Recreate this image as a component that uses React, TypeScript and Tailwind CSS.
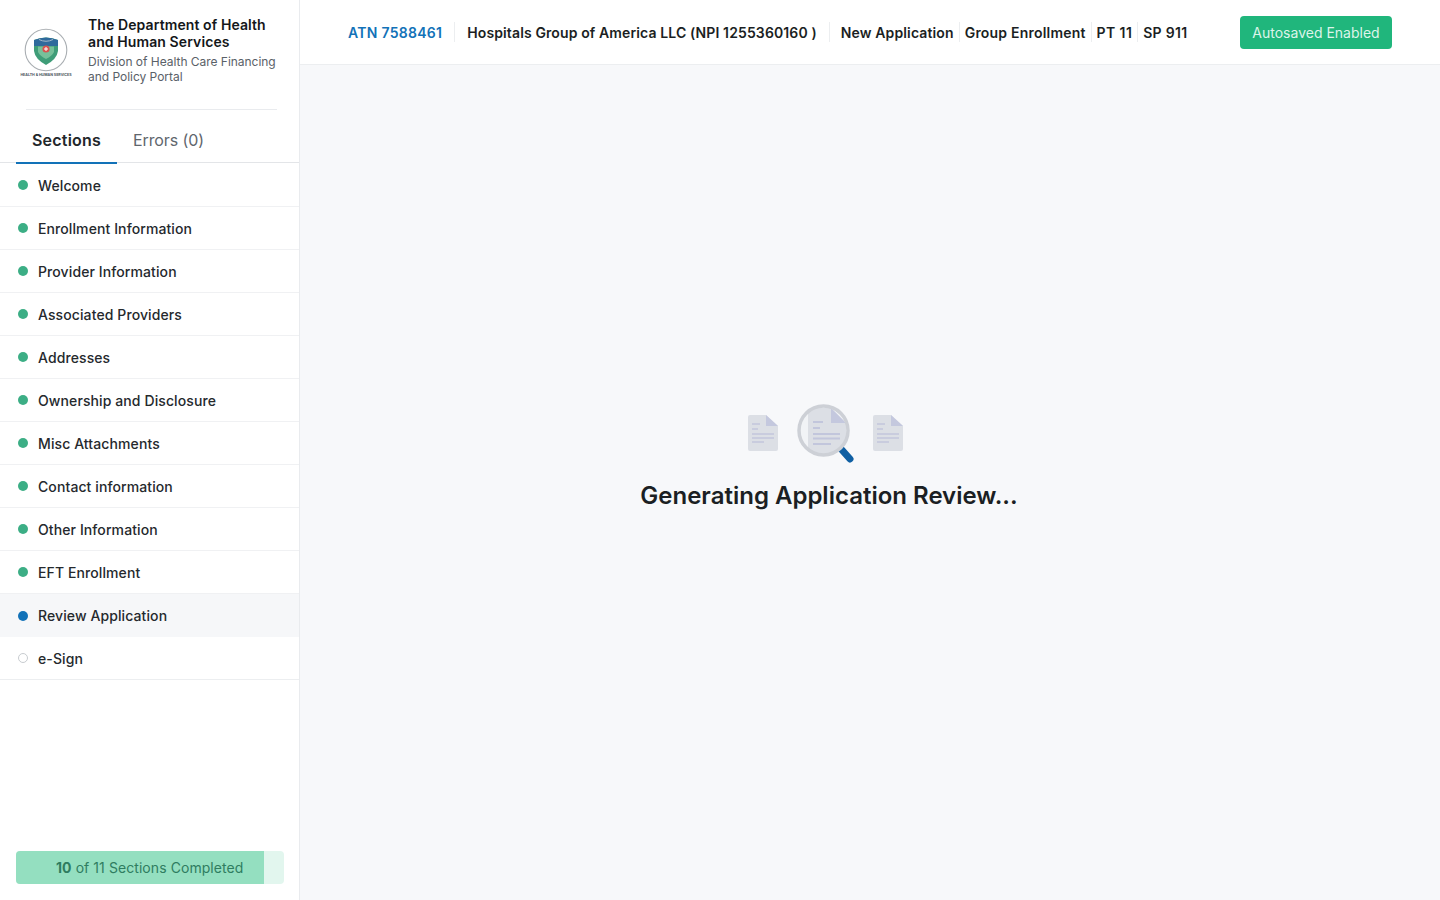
const sections = [
  'Welcome',
  'Enrollment Information',
  'Provider Information',
  'Associated Providers',
  'Addresses',
  'Ownership and Disclosure',
  'Misc Attachments',
  'Contact information',
  'Other Information',
  'EFT Enrollment',
];

function Logo() {
  return (
    <div className="flex h-[64px] w-[52px] shrink-0 flex-col items-center">
      <svg viewBox="0 0 44 44" className="mt-[12px] h-[44px] w-[44px] shrink-0">
        <circle cx="22" cy="22" r="20.8" fill="#fff" stroke="#a9aeb2" strokeWidth="1.1" />
        <path d="M10 12 Q22 7 34 12 L34 23 Q33 31 22 37 Q11 31 10 23 Z" fill="#3f9d78" />
        <path d="M10 12 Q22 7 34 12 L34 18 L10 18 Z" fill="#2f6a9c" />
        <path d="M14 18.5 H30 L30 24 Q28 28 22 31 Q16 28 14 24 Z" fill="#77c09a" />
        <circle cx="22" cy="21" r="3.6" fill="#d9534f" />
        <path d="M22 19 V23 M20 21 H24" stroke="#fff" strokeWidth="1" />
        <path d="M15 11.5 Q22 15 29 11.5" fill="none" stroke="#a6bacb" strokeWidth="1" />
      </svg>
      <span className="mt-[1px] text-[3.6px] leading-[5px] font-bold whitespace-nowrap text-[#4a5560]">
        HEALTH &amp; HUMAN SERVICES
      </span>
    </div>
  );
}

function Lens() {
  return (
    <svg viewBox="0 0 60 60" className="h-[60px] w-[60px]">
      <defs>
        <clipPath id="lens-clip">
          <circle cx="27.5" cy="27.5" r="24.5" />
        </clipPath>
      </defs>
      <path d="M46 47 L54 56" stroke="#0f5fa3" strokeWidth="7" strokeLinecap="round" />
      <circle cx="27.5" cy="27.5" r="24.5" fill="#f1f3f6" />
      <g clipPath="url(#lens-clip)">
        <path d="M12 5 H35 L50 20 V56 H12 Z" fill="#dcdfe5" />
        <path d="M35 5 L50 20 H35 Z" fill="#c4c8de" />
        <path d="M17 19 H27 M17 25 H24" stroke="#c2c6dc" strokeWidth="1.8" />
        <path d="M17 31 H44 M17 35.5 H44 M17 41 H35" stroke="#c2c6dc" strokeWidth="2" />
      </g>
      <circle cx="27.5" cy="27.5" r="24.5" fill="none" stroke="#cdd0d6" strokeWidth="3.5" />
    </svg>
  );
}

function Doc() {
  return (
    <svg viewBox="0 0 30 38" className="h-[38px] w-[30px]">
      <path d="M2 1 H18 L30 12 V35 Q30 37 28 37 H2 Q0 37 0 35 V3 Q0 1 2 1 Z" fill="#dcdfe5" />
      <path d="M18 1 L30 12 H18 Z" fill="#c4c8de" />
      <path d="M4 10 H12 M4 15 H10" stroke="#c2c6dc" strokeWidth="1.6" />
      <path d="M4 20 H26 M4 24 H26 M4 28 H16" stroke="#c2c6dc" strokeWidth="1.6" />
    </svg>
  );
}

export default function App() {
  return (
    <div className="flex h-[900px] w-[1440px] overflow-hidden bg-white font-['Inter',sans-serif] text-[#1b1f23]">
      <aside className="flex w-[300px] shrink-0 flex-col border-r border-[#e9ebee] bg-white">
        <div className="flex px-[20px] pt-[16px]">
          <Logo />
          <div className="ml-[16px]">
            <h1 className="text-[14px] leading-[17px] font-semibold tracking-[0.1px] text-[#14171a]">
              The Department of Health
              <br />
              and Human Services
            </h1>
            <p className="mt-[4px] text-[12px] leading-[15px] tracking-[-0.03px] text-[#5a6168]">
              Division of Health Care Financing
              <br />
              and Policy Portal
            </p>
          </div>
        </div>
        <div className="mt-[25px] ml-[26px] h-px w-[251px] bg-[#e9ebee]" />
        <div className="flex h-[53px] border-b border-[#e3e5e8] px-[16px]">
          <div className="-mb-[2px] flex w-[101px] items-center justify-center border-b-2 border-[#1272b8] pt-[8px] text-[16px] font-semibold tracking-[0.2px] text-[#22262a]">
            Sections
          </div>
          <div className="flex items-center pt-[8px] pl-[16px] text-[16px] tracking-[-0.1px] text-[#5f666d]">Errors (0)</div>
        </div>
        <ul className="pt-px">
          {sections.map((name) => (
            <li key={name} className="flex h-[43px] items-center gap-[10px] border-b border-[#f0f1f3] pl-[18px] text-[14px] font-medium tracking-[0.1px] text-[#25292d]">
              <span className="h-[10px] w-[10px] rounded-full bg-[#3cae85]" />
              {name}
            </li>
          ))}
          <li className="flex h-[43px] items-center gap-[10px] bg-[#f6f7f9] pl-[18px] text-[14px] font-medium tracking-[0.1px] text-[#25292d]">
            <span className="h-[10px] w-[10px] rounded-full bg-[#1272b8]" />
            Review Application
          </li>
          <li className="flex h-[43px] items-center gap-[10px] border-b border-[#eceef0] pl-[18px] text-[14px] font-medium tracking-[0.1px] text-[#25292d]">
            <span className="h-[10px] w-[10px] rounded-full border border-[#c8ccd0] bg-white" />
            e-Sign
          </li>
        </ul>
        <div className="mt-auto pr-[15px] pb-[16px] pl-[16px]">
          <div className="h-[33px] overflow-hidden rounded-[4px] bg-[#e2f6ee]">
            <div className="flex h-full w-[248px] items-center bg-[#94dfc0] pl-[40px] text-[14px] tracking-[0.07px] whitespace-nowrap text-[#2f7d60]">
              <span className="font-bold">10</span>&nbsp;of 11 Sections Completed
            </div>
          </div>
        </div>
      </aside>
      <main className="flex min-w-0 flex-1 flex-col">
        <header className="flex h-[65px] shrink-0 items-center border-b border-[#eceef0] bg-white px-[48px] text-[14px] font-semibold text-[#1b1f23]">
          <span className="tracking-[0.27px] text-[#1272b8]">ATN 7588461</span>
          <span className="mx-[12px] h-[20px] w-px shrink-0 bg-[#eceef0]" />
          <span className="tracking-[0.12px]">Hospitals Group of America LLC (NPI 1255360160 )</span>
          <span className="mr-[5px] ml-[12px] h-[20px] w-px shrink-0 bg-[#eceef0]" />
          <span className="ml-[6px] tracking-[0.13px]">New Application</span>
          <span className="mx-[5px] h-[20px] w-px shrink-0 bg-[#eceef0]" />
          <span className="tracking-[0.2px]">Group Enrollment</span>
          <span className="mx-[5px] h-[20px] w-px shrink-0 bg-[#eceef0]" />
          <span className="tracking-[0.4px]">PT 11</span>
          <span className="mx-[5px] h-[20px] w-px shrink-0 bg-[#eceef0]" />
          <span className="tracking-[0.3px]">SP 911</span>
          <button className="ml-auto flex h-[33px] w-[152px] items-center justify-center rounded-[4px] bg-[#20b67c] text-[14px] font-normal text-[#dcf4ea]">
            Autosaved Enabled
          </button>
        </header>
        <div className="flex flex-1 flex-col items-center bg-[#f7f8fa] pt-[338px] pr-[82px]">
          <div className="mr-[7px] flex items-center gap-[17.5px]">
            <Doc />
            <Lens />
            <Doc />
          </div>
          <h2 className="mt-[18px] text-[24px] leading-[30px] font-semibold text-[#1b1f23]">
            Generating Application Review...
          </h2>
        </div>
      </main>
    </div>
  );
}
